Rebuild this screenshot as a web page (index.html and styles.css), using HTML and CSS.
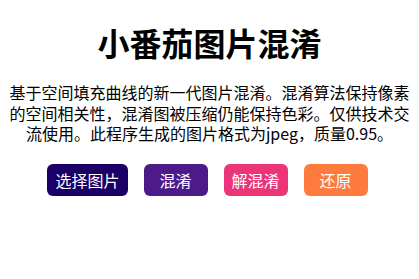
FILE: index.html
```html
<!DOCTYPE html>
<html lang="zh-CN">
<head>
<meta charset="utf-8">
<title>小番茄图片混淆</title>
<link rel="stylesheet" href="styles.css">
</head>
<body>
<main class="app">
  <h1 class="title">小番茄图片混淆</h1>
  <p class="desc">基于空间填充曲线的新一代图片混淆。混淆算法保持像素的空间相关性，混淆图被压缩仍能保持色彩。仅供技术交流使用。此程序生成的图片格式为jpeg，质量0.95。</p>
  <div class="actions">
    <button class="btn btn-select">选择图片</button>
    <button class="btn btn-encrypt">混淆</button>
    <button class="btn btn-decrypt">解混淆</button>
    <button class="btn btn-restore">还原</button>
  </div>
</main>
</body>
</html>
```
FILE: styles.css
```css
html, body {
  margin: 0;
  background: #fff;
}
body {
  padding: 8px;
  font-family: "Noto Sans CJK SC", "Noto Sans", sans-serif;
  color: #000;
}
.app {
  display: flex;
  flex-direction: column;
  align-items: center;
}
.title {
  margin: 13px 0 0;
  font-size: 32px;
  font-weight: 700;
  line-height: 42px;
}
.desc {
  margin: 19px 0 0;
  font-size: 16px;
  line-height: 20.5px;
  text-align: center;
}
.actions {
  display: flex;
  gap: 16px;
  margin: 20px 4px 0 0;
}
.btn {
  min-width: 64px;
  height: 32px;
  padding: 0 8px;
  border: none;
  border-radius: 6px;
  color: #fff;
  font-family: inherit;
  font-size: 16px;
  line-height: 32px;
}
.btn-select { background: #1a0066; }
.btn-encrypt { background: #4c1a89; }
.btn-decrypt { background: #ec3479; }
.btn-restore { background: #fe7a3d; }
```
